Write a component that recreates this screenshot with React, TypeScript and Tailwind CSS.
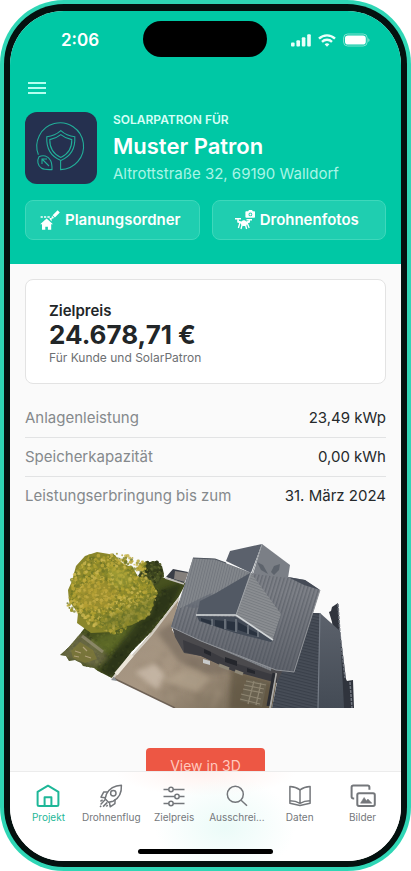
import React from 'react';

const rows = [
  { label: 'Anlagenleistung', value: '23,49 kWp' },
  { label: 'Speicherkapazität', value: '0,00 kWh' },
  { label: 'Leistungserbringung bis zum', value: '31. März 2024' },
];

function StatusBar() {
  return (
    <div className="grid grid-cols-3 items-center pt-[10px] text-white">
      <span className="pt-[2px] pl-[51px] text-[17px] leading-5 font-semibold">2:06</span>
      <div className="h-9 w-[124px] justify-self-center rounded-full bg-black" />
      <div className="flex items-center justify-end gap-[7px] pt-[2px] pr-[31px]">
        <svg width="20" height="14" viewBox="0 0 20 14" fill="#eafffa" aria-hidden="true">
          <rect x="0" y="9.5" width="3.6" height="4" rx="1" />
          <rect x="5.4" y="7.2" width="3.6" height="6.3" rx="1" />
          <rect x="10.8" y="4.3" width="3.6" height="9.2" rx="1" />
          <rect x="16.2" y="1.3" width="3.6" height="12.2" rx="1" />
        </svg>
        <svg width="18" height="13" viewBox="0 0 18 13" fill="none" stroke="#eafffa" strokeWidth="2.4" aria-hidden="true">
          <path d="M1 4.6a11.6 11.6 0 0 1 16 0" />
          <path d="M4 7.8a7.2 7.2 0 0 1 10 0" />
          <path d="M6.6 10.3a3.5 3.5 0 0 1 4.8 0L9 12.8z" fill="#eafffa" stroke="none" />
        </svg>
        <svg width="27" height="14" viewBox="0 0 27 14" aria-hidden="true">
          <rect x="0.6" y="1" width="23.6" height="12" rx="4" fill="none" stroke="#7fe3cf" />
          <rect x="2" y="2.4" width="20.8" height="9.2" rx="2.8" fill="#fff" />
          <path d="M25.4 5.2v3.8c1.4-.6 1.4-3.2 0-3.8z" fill="#a5eadb" />
        </svg>
      </div>
    </div>
  );
}

function PatronLogo() {
  return (
    <svg
      className="size-[72px] shrink-0 rounded-xl bg-[#25304f]"
      viewBox="0 0 72 72"
      fill="none"
      stroke="#22ad98"
      strokeWidth="1.1"
      aria-hidden="true"
    >
      <path d="M13.4 42.8A23.4 23.4 0 1 1 35.6 57.6V48.4" />
      <path d="M35.8 18.6c4 3.6 9 5.6 14 6.2.6 10.5-2.5 19-14 23.6-11.5-4.6-14.6-13.1-14-23.6 5-.6 10-2.6 14-6.2z" />
      <path d="M35.8 22.6c3.3 2.7 7 4.3 11 5 .2 8-2.4 14-11 18-8.6-4-11.2-10-11-18 4-.7 7.700-2.300 11-5z" />
      <path d="M14 44.8c4-2.2 9-1 11.600 3.600 1.200 2.400 1.500 5.200 1.400 9.200-4 .2-7.700.2-10.300-1.300-4.400-2.600-4.700-8-2.700-11.500z" />
      <path d="M24 54l-7-7M17 52v-5h5" />
    </svg>
  );
}

function PlanIcon() {
  return (
    <svg width="20" height="20" viewBox="0 0 20 20" fill="#fff" aria-hidden="true">
      <path d="M6.600 8.600L.2 14.200h1.800v5.500h3.300v-3h2.600v3h3.300v-5.500H13z" />
      <path d="M9.600 9V8h2v3.400z" />
      <path d="M.6 6.200h2.200v1.500H.6zM4 6.200h2.200v1.500H4zM7.400 6.200h2.400v1.500H7.400z" />
      <path d="M17.600.3l2.200 2.100-4.900 5-2.300-2.200zM12 5.800l2.200 2.200-3 .9z" />
    </svg>
  );
}

function DroneIcon() {
  return (
    <svg width="20" height="20" viewBox="0 0 20 20" fill="#fff" aria-hidden="true">
      <path
        fillRule="evenodd"
        d="M11.2 1.3h2l.8-1.200h3l.8 1.200h1.600a.7.7 0 0 1 .6.7v5a.7.7 0 0 1-.7.7h-8.100a.9.9 0 0 1-.8-.8V2.1a.8.8 0 0 1 .8-.8zM15.4 2.500a1.900 1.900 0 1 0 .01 3.800 1.900 1.900 0 0 0-.01-3.800z"
      />
      <circle cx="15.4" cy="4.4" r="1" />
      <path d="M0 8h6v1.500H0zM11.500 9H17v1.500h-5.500z" />
      <path d="M2.200 9.300h1.700v1.500l2.500.6c.8-.9 1.700-1.200 2.500-1.200s1.700.5 2.300 1.200l2.400-.6v-.8H15v2.500l-3 .9c0 1.700-1 2.700-2.900 2.700s-3-1-3.200-2.700l-3.700-1z" />
      <path d="M5 12.500L3.400 18M12 12.500l2.200 5.500M7.200 14.500L6 19M10.400 14.500l1.200 4.500" stroke="#fff" strokeWidth="1.3" />
    </svg>
  );
}

// fixed pseudo random sequence so that the foliage looks the same on every render
function createLeaves(count: number, cx: number, cy: number, rx: number, ry: number, size: number, seed: number) {
  let s = seed;
  const next = () => {
    s = (s * 16807) % 2147483647;
    return s / 2147483647;
  };
  return Array.from({ length: count }, () => {
    const angle = next() * Math.PI * 2;
    const dist = Math.sqrt(next());
    // wavy rim instead of a clean ellipse
    const rim = 1 + 0.05 * Math.sin(angle * 5) + 0.04 * Math.cos(angle * 9);
    return {
      x: cx + Math.cos(angle) * dist * rx * rim,
      y: cy + Math.sin(angle) * dist * ry * rim,
      r: size * (0.5 + next()),
      tone: Math.floor(next() * 6),
    };
  });
}

const treeTones = ['#98922b', '#b1a132', '#bfab3d', '#80822a', '#ccb851', '#6c7325'];
const bushTones = ['#3c451f', '#4d5726', '#5d6430', '#2e3618', '#465020', '#353d1b'];
const yardTones = ['#a08f7a', '#8a7a68', '#b3a28d', '#7c6d5b', '#94846f', '#a89885'];
const grassTones = ['#3f4a1d', '#566026', '#5c6729', '#353e1a', '#4a5522', '#3a431c'];

const treeLeaves = createLeaves(1500, 111, 592, 43, 39, 1.3, 77);
const bushLeaves = createLeaves(160, 151, 572, 11, 11, 1.3, 31);
const yardSpots = createLeaves(160, 198, 665, 60, 40, 3, 19);
const grassSpots = createLeaves(900, 120, 630, 62, 50, 1.2, 53);

function HouseModel() {
  return (
    <svg className="w-[296px]" viewBox="57 543 296 165" role="img" aria-label="3D-Modell des Hauses">
      <defs>
        <pattern id="roofLeft" width="2.6" height="6" patternUnits="userSpaceOnUse" patternTransform="rotate(14)">
          <rect width="2.6" height="6" fill="#83878c" />
          <rect width="1" height="6" fill="#73777e" />
        </pattern>
        <pattern id="roofRight" width="3.6" height="6" patternUnits="userSpaceOnUse" patternTransform="rotate(17)">
          <rect width="3.6" height="6" fill="#7d8087" />
          <rect width="1.4" height="6" fill="#666a72" />
        </pattern>
        <pattern id="gable" width="6" height="2.6" patternUnits="userSpaceOnUse" patternTransform="rotate(20)">
          <rect width="6" height="2.6" fill="#8b8e92" />
          <rect width="6" height="1" fill="#797d82" />
        </pattern>
        <pattern id="annex" width="6" height="3" patternUnits="userSpaceOnUse" patternTransform="rotate(14)">
          <rect width="6" height="3" fill="#474d57" />
          <rect width="6" height="1.2" fill="#3a404a" />
        </pattern>
        <linearGradient id="roofShade" x1="0" y1="0" x2="0" y2="1">
          <stop offset="0.3" stopColor="#40454f" stopOpacity="0" />
          <stop offset="1" stopColor="#40454f" stopOpacity="0.5" />
        </linearGradient>
        <linearGradient id="annexLight" x1="0" y1="0" x2="0" y2="1">
          <stop offset="0" stopColor="#5c626c" />
          <stop offset="1" stopColor="#444b55" />
        </linearGradient>
        <linearGradient id="yard" x1="0" y1="0" x2="1" y2="1">
          <stop offset="0" stopColor="#9c8e7c" />
          <stop offset="0.5" stopColor="#a89783" />
          <stop offset="1" stopColor="#6b604d" />
        </linearGradient>
        <clipPath id="grassClip">
          <path d="M59 655l8-7 12-14 20-26 38-31 28 1 20 5-8 15-26 33-20 20-20 27-14-7-4-3-11-2-2-3-6-3-6 1-3-5z" />
        </clipPath>
        <clipPath id="yardClip">
          <path d="M112 678l24-28 42-52-7 32 12 20 30 8 63 22-5 28h-97z" />
        </clipPath>
        <filter id="soft">
          <feGaussianBlur stdDeviation="2.5" />
        </filter>
      </defs>

      {/* garden */}
      <g clipPath="url(#grassClip)">
        <rect x="57" y="570" width="130" height="112" fill="#47511f" />
        {grassSpots.map((p, i) => (
          <circle key={i} cx={p.x} cy={p.y} r={p.r} fill={grassTones[p.tone]} />
        ))}
        <path d="M92 640l58-22 12-16-28 34-26 18-22-8z" fill="#65722c" opacity="0.7" filter="url(#soft)" />
        <path d="M160 590l22-8-10 22-62 76-12-10 22-28z" fill="#242b16" opacity="0.7" filter="url(#soft)" />
        <path d="M57 656l22-24 24 20 4 6-12 10-14-4z" fill="#7e775a" opacity="0.6" filter="url(#soft)" />
        <path d="M70 651l9-9 13 8 4 9-12 4-12-5z" fill="#7d7838" opacity="0.8" />
        <path d="M74 651l6 2M82 647l4 4M73 656l5 1M84 656l6 2" stroke="#b0a078" strokeWidth="1.2" />
        <path d="M81 636l21 16" stroke="#a39c86" strokeWidth="3" opacity="0.6" />
      </g>

      {/* yard */}
      <g clipPath="url(#yardClip)">
        <rect x="108" y="595" width="170" height="115" fill="url(#yard)" />
        <g opacity="0.3" filter="url(#soft)">
          {yardSpots.map((p, i) => (
            <circle key={i} cx={p.x} cy={p.y} r={p.r} fill={yardTones[p.tone]} />
          ))}
        </g>
        <path d="M172 622l12 28 30 10 20 12-30 2-26-12-22-30z" fill="#74675a" opacity="0.6" filter="url(#soft)" />
        <path d="M134 672l20-8 10 12-8 14z" fill="#cbbcab" opacity="0.8" filter="url(#soft)" />
        <path d="M160 680l30-12 20 10-14 14z" fill="#b5a58f" opacity="0.6" filter="url(#soft)" />
        <path d="M230 668l44 16v26h-46z" fill="#554b39" opacity="0.6" filter="url(#soft)" />
      </g>
      <path d="M111 679l15-17 24-27 28-37" stroke="#d3cec3" strokeWidth="2" fill="none" />
      <path d="M115 674l16-19" stroke="#ece6d9" strokeWidth="4" />
      <path d="M112 678l62 30" stroke="#6e6256" strokeWidth="1.5" />
      <path d="M110 680l3-3 3 4" fill="#8c9297" />

      {/* shed behind the garden */}
      <path d="M165 577l7-8 15 3-4 11z" fill="#3a3e47" />
      <path d="M174 571l13 2-3 9-11-3z" fill="#85807c" />
      <path d="M164 578l19 6" stroke="#c6c2be" strokeWidth="1.5" />

      {/* trees */}
      <path d="M137 576l7-12 9-3 8 5 2 8-6 10-10 4z" fill="#3f4820" />
      {bushLeaves.map((p, i) => (
        <circle key={i} cx={p.x} cy={p.y} r={p.r} fill={bushTones[p.tone]} />
      ))}
      <path
        d="M75 566l9-10 12-4 18 3 5 7 13 6 6 11 12 1 5 10-4 19-5 8-15 8-8 2-12 5-21 1-14-10 1-10-9-12-1-11 4-9z"
        fill="#8a862b"
      />
      {treeLeaves.map((p, i) => (
        <circle key={i} cx={p.x} cy={p.y} r={p.r} fill={treeTones[p.tone]} opacity="0.8" />
      ))}
      <path d="M96 622l42-18 14-12-2 22-24 12-24 4z" fill="#66702a" opacity="0.5" filter="url(#soft)" />
      <path d="M74 588l20-10 24 12-10 18-26 2z" fill="#b79d35" opacity="0.45" filter="url(#soft)" />
      <path d="M104 568l22 2 6 14-16 4z" fill="#a7a53a" opacity="0.5" filter="url(#soft)" />

      {/* walls */}
      <path d="M171 626l29 12 94 34-18 10-46-12-30-14-17-3-9-16z" fill="#4b4a4d" />
      <path d="M182 640l18 7 30 15 46 14v7l-44-12-32-15-17-4z" fill="#3b3b40" />
      <g fill="#24262c">
        <path d="M203 649l7 3v4l-7-3zM224 657l12 4v5l-12-4zM246 668l8 3v3l-8-2zM214 644l3 1v3l-3-1zM240 652l3 1v3l-3-1zM265 660l4 1v3l-4-1z" />
      </g>
      <path d="M202 659l7 2v4l-7-2z" fill="#c9cbcc" />
      <path d="M218 665l10 4M234 671l8 3" stroke="#8e8878" strokeWidth="3" />

      {/* annex and fence on the right */}
      <path d="M328 612l2-1 1-4 6-4 2 28 3 24 3 24 1 2 6-1 1 28h-12l-10-86z" fill="#30343d" />
      <path d="M337 604l2 30 5 44M349 682l2 26" stroke="#727780" strokeWidth="1.5" strokeDasharray="3 1" fill="none" />
      <path d="M311 613h8l-1 95h-47l5-26 6-12 11 1z" fill="url(#annex)" />
      <path d="M319 613l20 18 4 77h-26z" fill="url(#annexLight)" />
      <path d="M319 613l-2 95" stroke="#757c86" strokeWidth="1.2" />
      <path d="M275 673l-6 35" stroke="#aaa9a6" strokeWidth="2.2" />
      <path d="M273 673l-6 33" stroke="#2a2c32" strokeWidth="3" />

      {/* pallets */}
      <path d="M246 679l20 4-5 24-22-6z" fill="#6a6250" />
      <path
        d="M245 681l20 4M243 685l20 4M242 689l20 4M240 694l20 5M239 699l20 5M253 681l-6 23M260 683l-5 22"
        stroke="#8f8672"
        strokeWidth="1.2"
      />

      {/* main roof */}
      <path d="M192 558l22 1 36 14-15 42-36-2 73 27-2 31-70-30-30-14z" fill="url(#roofLeft)" />
      <path d="M250 573l37 4 17 3 15 10-26 82-18-2-75-29-30-14 8-26 57 14z" fill="url(#roofRight)" />
      <path d="M192 558l22 1 36 14 37 4 17 3 15 10-26 82-18-2-75-29-30-14z" fill="url(#roofShade)" />
      <path d="M192 558l22 1 36 14-50 28-16 5-7 3z" fill="url(#roofLeft)" />
      <path d="M184 606l18-9 9-4-4 11-7 3-8 1z" fill="#646973" opacity="0.7" />
      <path d="M287 577l17 3 15 10-16-5z" fill="#454b56" />
      <path d="M319 590l-26 82-18-2-75-29-30-14" fill="none" stroke="#8f9297" strokeWidth="1" />
      <path d="M192 558l22 1 11 4" fill="none" stroke="#50565f" strokeWidth="1.2" />

      {/* rear gable */}
      <path d="M225 561l4-10 32-7-11 29z" fill="#5b616c" />
      <path d="M261 544l28 21-2 13-35-4z" fill="#7b7f86" />
      <path d="M261 544l-10 30" stroke="#9a9ea3" strokeWidth="1" />
      <path d="M256 562l6 3 5 9-7-4zM270 572l3-6 6-2-1 6-5 5z" fill="#565c65" opacity="0.8" />

      {/* front dormer */}
      <path d="M196 616l39 1 37 23-2 2-36-9-36-12z" fill="#434b57" />
      <path d="M200 618l11 3v4l-11-4zM214 620l9 1v8l-9-3zM226 621l8 1v9l-8-2zM237 622l9 5v6l-9-3zM248 629l8 4v3l-8-2z" fill="#29323f" />
      <path d="M211 619v7M224 619v10M235 619v13M247 625v9M257 631v6" stroke="#8b9299" strokeWidth="1" />
      <path d="M249 573l-14 42-39-1 3-13 16-8z" fill="#525964" />
      <path d="M250 573l30 41-8 25-37-24z" fill="url(#gable)" />
      <path d="M195 615h40l37 25" fill="none" stroke="#d3d7d9" strokeWidth="1.7" />
      <path d="M250 573l-15 42" stroke="#9da1a5" strokeWidth="1" />
    </svg>
  );
}

function HomeIcon() {
  return (
    <>
      <path d="M1.6 7.800L12 1.700l10.400 6.100v12.700a1.500 1.500 0 0 1-1.500 1.500H3.100a1.500 1.500 0 0 1-1.500-1.500z" />
      <path d="M8.600 21.500v-8.300h6.800v8.300" />
    </>
  );
}

function RocketIcon() {
  return (
    <>
      <path d="M22.400 1.200c-6.800.2-11.800 2.800-14.900 8.800l-1.400 4.800 3.400 3.500 4.700-1.100c5.900-3.100 8.600-8.600 8.200-16z" />
      <circle cx="14.300" cy="9.200" r="2.700" />
      <path d="M8.800 7.900H4.800L2 13.200l4.500.6M16.100 15.300l-.2 4.400-4.700 3.100-.8-4.700M6.300 15.600l-4.700 4.800M8.300 18.400l-4.200 4.200M1.400 17.400l2.200-1.600M7.400 22.600l1.200-1.800M1 22.900l1.200-1.200" />
    </>
  );
}

function SlidersIcon() {
  return (
    <>
      <path d="M1.500 5.500h5.300M11.200 5.500H22.500M1.500 12.500h11.300M17.200 12.500h5.300M1.500 19.500h5.300M11.200 19.500H22.500" />
      <circle cx="9" cy="5.500" r="2.200" />
      <circle cx="15" cy="12.500" r="2.200" />
      <circle cx="9" cy="19.500" r="2.200" />
    </>
  );
}

function SearchIcon() {
  return (
    <>
      <circle cx="10.300" cy="10.300" r="8" />
      <path d="M16.100 16.200l5.900 5.600" />
    </>
  );
}

function BookIcon() {
  return (
    <>
      <path d="M12 5.900C9 3.700 5.600 2.700 1.900 2.500v16.800L12 21.600l10.100-2.300V2.500C18.400 2.700 15 3.700 12 5.900z" />
      <path d="M12 5.900v13.500M1.900 16.800c3.700 0 7.100.8 10.100 2.600 3-1.800 6.400-2.600 10.100-2.600" />
    </>
  );
}

function PicturesIcon() {
  return (
    <>
      <path d="M3.200 14.500H2.300A1.700 1.700 0 0 1 .6 12.800V3.300a1.700 1.700 0 0 1 1.700-1.700h14.400a1.700 1.700 0 0 1 1.700 1.700v2.500" strokeWidth="2" />
      <rect x="6.300" y="9.300" width="17.500" height="12.700" rx="1.700" strokeWidth="2" />
      <path d="M9.500 19.200l3.600-5.800 2.300 3.300 1.500-1.700 4 4.200z" fill="currentColor" strokeWidth="0.5" />
    </>
  );
}

const tabs = [
  { label: 'Projekt', icon: HomeIcon, active: true },
  { label: 'Drohnenflug', icon: RocketIcon },
  { label: 'Zielpreis', icon: SlidersIcon },
  { label: 'Ausschrei...', icon: SearchIcon },
  { label: 'Daten', icon: BookIcon },
  { label: 'Bilder', icon: PicturesIcon },
];

function TabBar() {
  return (
    <nav className="flex h-[90px] shrink-0 flex-col justify-between border-t border-[#ececec] bg-white bg-[radial-gradient(ellipse_70px_50px_at_55%_62%,#ebfbf8,transparent),radial-gradient(ellipse_90px_24px_at_50%_0%,#fff1ee,transparent)] pb-[7px]">
      <div className="flex px-[7px] pt-3">
        {tabs.map(({ label, icon: Icon, active }) => (
          <button
            key={label}
            type="button"
            className={`flex min-w-0 flex-1 flex-col items-center gap-[3px] ${active ? 'text-[#1eb798]' : 'text-[#74777b]'}`}
          >
            <svg
              width="24"
              height="24"
              viewBox="0 0 24 24"
              fill="none"
              stroke="currentColor"
              strokeWidth={active ? 2 : 1.5}
              strokeLinejoin="round"
              className="overflow-visible"
              aria-hidden="true"
            >
              <Icon />
            </svg>
            <span className="text-[10px] leading-3 whitespace-nowrap">{label}</span>
          </button>
        ))}
      </div>
      <div className="h-[5px] w-[135px] self-center rounded-full bg-black" />
    </nav>
  );
}

export default function App() {
  return (
    <div className="h-dvh bg-white font-['Inter',sans-serif]">
      <div className="h-full rounded-[64px] bg-[#2fd6b5] p-1">
        <div className="h-full rounded-[60px] bg-[#04110f] px-[6px] pt-[7px] pb-[6px]">
          <div className="flex h-full flex-col overflow-hidden rounded-[54px] bg-[#fafafa]">
            <div className="min-h-0 flex-1 overflow-hidden">
              <header className="bg-[#00c8a5] pb-6 text-white">
                <StatusBar />
                <div className="px-[15px]">
                  <button type="button" aria-label="Menü" className="mt-[23px] flex h-4 w-6 flex-col items-center justify-center gap-[3px] px-[3px]">
                    <span className="h-[2px] w-full bg-[#b5fff0]" />
                    <span className="h-[2px] w-full bg-[#b5fff0]" />
                    <span className="h-[2px] w-full bg-[#b5fff0]" />
                  </button>
                  <div className="mt-4 flex gap-4">
                    <PatronLogo />
                    <div className="min-w-0">
                      <p className="text-[12px] leading-4 font-semibold text-[#d5fff6]">SOLARPATRON FÜR</p>
                      <h1 className="mt-1 text-[22px] leading-7 font-semibold">Muster Patron</h1>
                      <p className="mt-1 text-[15px] leading-5 text-[#a9f5e6]">Altrottstraße 32, 69190 Walldorf</p>
                    </div>
                  </div>
                  <div className="mt-4 grid grid-cols-2 gap-3">
                    <button type="button" className="flex h-10 items-center justify-center gap-[5px] rounded-lg border border-[#3ed8bb] bg-[#1fceb0] pr-1 text-[15px] font-semibold">
                      <PlanIcon />
                      Planungsordner
                    </button>
                    <button type="button" className="flex h-10 items-center justify-center gap-[5px] rounded-lg border border-[#3ed8bb] bg-[#1fceb0] pr-1 text-[15px] font-semibold">
                      <DroneIcon />
                      Drohnenfotos
                    </button>
                  </div>
                </div>
              </header>

              <main className="px-[15px] pt-[15px]">
                <section className="rounded-lg border border-[#e3e3e3] bg-white px-[23px] pt-[22px] pb-[17px] text-[#222628]">
                  <h2 className="text-[15px] leading-[18px] font-semibold">Zielpreis</h2>
                  <p className="text-[26px] leading-[30px] font-bold">24.678,71 €</p>
                  <p className="text-[12px] leading-4 text-[#6d7073]">Für Kunde und SolarPatron</p>
                </section>

                <dl className="mt-[15px] divide-y divide-[#e2e3e4]">
                  {rows.map((row) => (
                    <div key={row.label} className="flex h-[39px] items-center justify-between text-[15px]">
                      <dt className="text-[#85898c]">{row.label}</dt>
                      <dd className="text-[#25292b]">{row.value}</dd>
                    </div>
                  ))}
                </dl>

                <div className="mt-[27px] flex justify-center">
                  <HouseModel />
                </div>
                <div className="mt-10 flex justify-center">
                  <button type="button" className="h-[34px] w-[119px] rounded bg-[#ed5744] text-[14px] text-[#ffc9be]">
                    View in 3D
                  </button>
                </div>
              </main>
            </div>
            <TabBar />
          </div>
        </div>
      </div>
    </div>
  );
}
